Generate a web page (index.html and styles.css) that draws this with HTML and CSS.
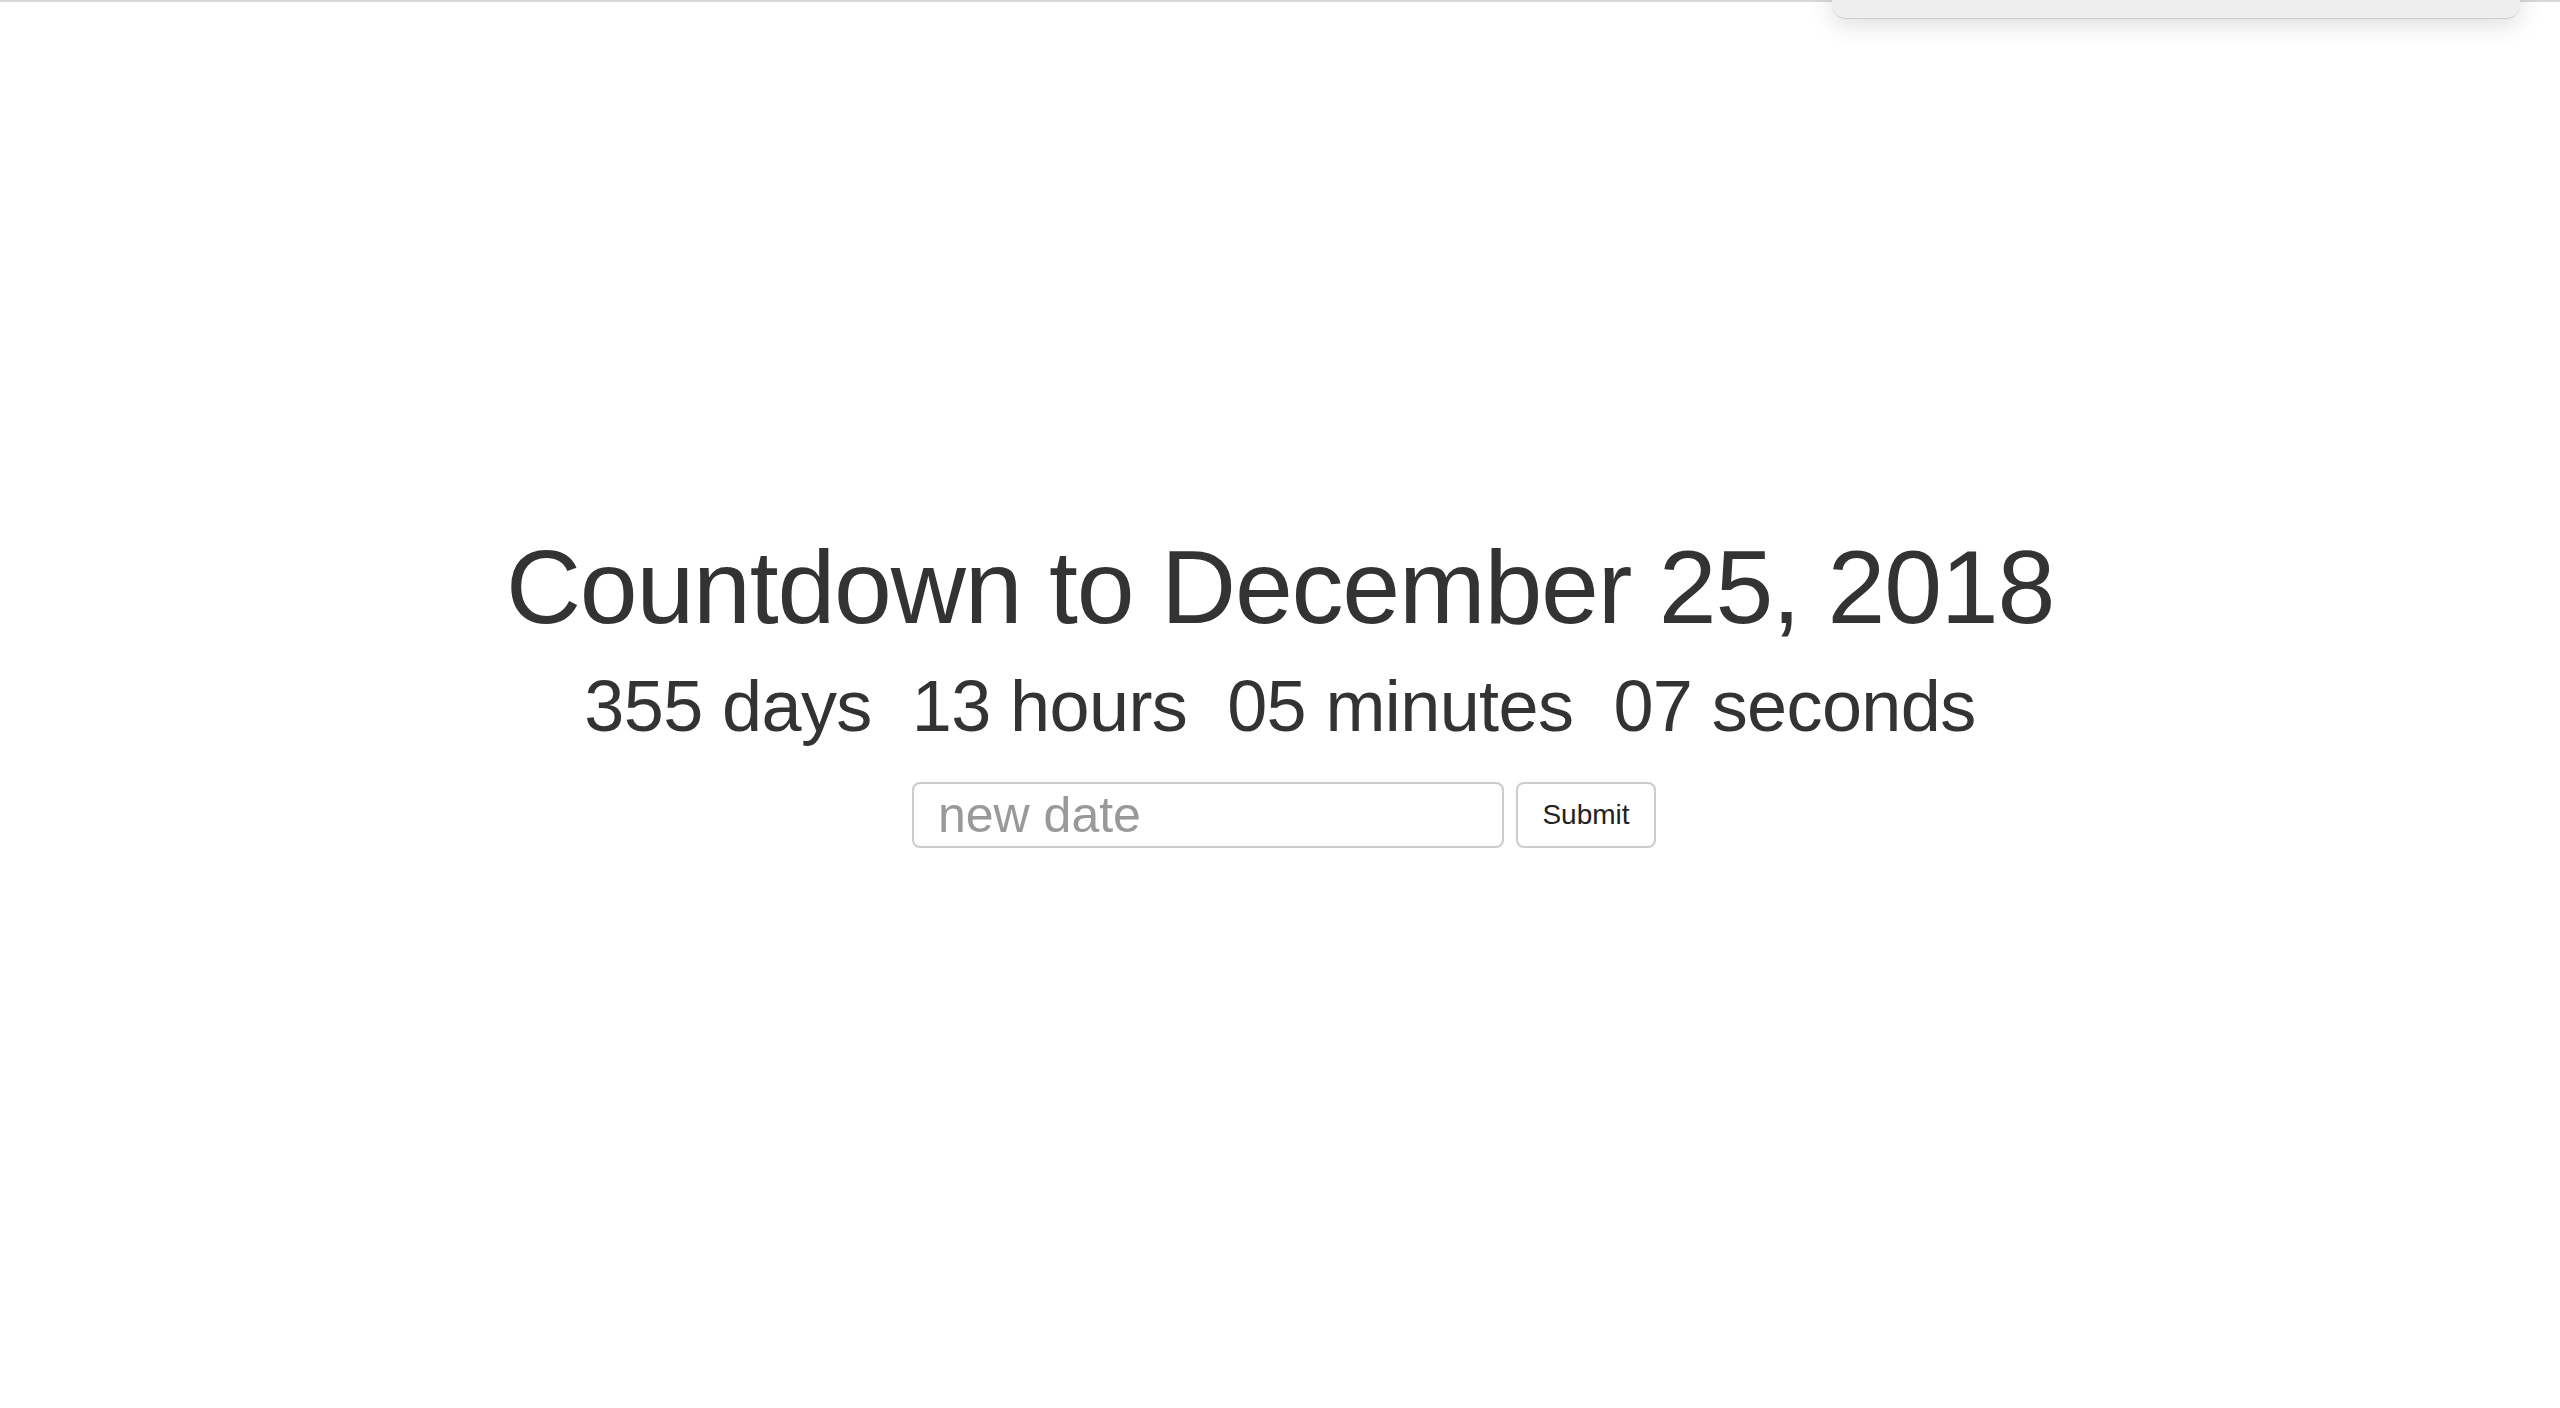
FILE: index.html
```html
<!DOCTYPE html>
<html lang="en">
<head>
<meta charset="utf-8">
<title>Countdown</title>
<link rel="stylesheet" href="styles.css">
</head>
<body>
<div class="topline"></div>
<div class="popup"></div>
<main class="page">
  <h1 class="title">Countdown to December 25, 2018</h1>
  <div class="timer">
    <span class="unit">355 days</span>
    <span class="unit">13 hours</span>
    <span class="unit">05 minutes</span>
    <span class="unit">07 seconds</span>
  </div>
  <form class="form">
    <input class="date-input" type="text" placeholder="new date">
    <button class="submit" type="button">Submit</button>
  </form>
</main>
</body>
</html>
```

FILE: styles.css
```css
html, body {
  margin: 0;
  padding: 0;
  background: #ffffff;
}
body {
  font-family: "Liberation Sans", Arial, Helvetica, sans-serif;
  color: #333333;
  height: 1408px;
  overflow: hidden;
  position: relative;
}
.topline {
  height: 2px;
  background: #d8d8d8;
}
.popup {
  position: absolute;
  top: -20px;
  left: 1832px;
  width: 688px;
  height: 38px;
  background: #eeeeee;
  border-bottom: 1px solid #cfcfcf;
  border-radius: 0 0 14px 14px;
  box-shadow: 0 6px 24px rgba(0, 0, 0, 0.13);
}
.page {
  display: flex;
  flex-direction: column;
  align-items: center;
  padding-top: 528px;
}
.title {
  margin: 0;
  font-weight: 400;
  font-size: 104px;
  letter-spacing: -1.2px;
  line-height: 1.1;
  color: #333333;
}
.timer {
  margin-top: 23px;
  display: flex;
  gap: 40px;
  font-size: 72px;
  letter-spacing: -0.6px;
  line-height: 1.1;
  color: #333333;
}
.form {
  margin: 35px 0 0 8px;
  display: flex;
  gap: 12px;
}
.date-input {
  box-sizing: border-box;
  width: 592px;
  height: 66px;
  padding: 0 24px;
  border: 2px solid #cccccc;
  border-radius: 8px;
  font-family: "Liberation Sans", Arial, Helvetica, sans-serif;
  font-size: 50px;
  color: #333333;
  background: #ffffff;
  outline: none;
}
.date-input::placeholder {
  color: #999999;
}
.submit {
  box-sizing: border-box;
  width: 140px;
  height: 66px;
  padding: 0;
  border: 2px solid #cccccc;
  border-radius: 8px;
  background: #ffffff;
  font-family: "Liberation Sans", Arial, Helvetica, sans-serif;
  font-size: 28px;
  color: #222222;
}
```
